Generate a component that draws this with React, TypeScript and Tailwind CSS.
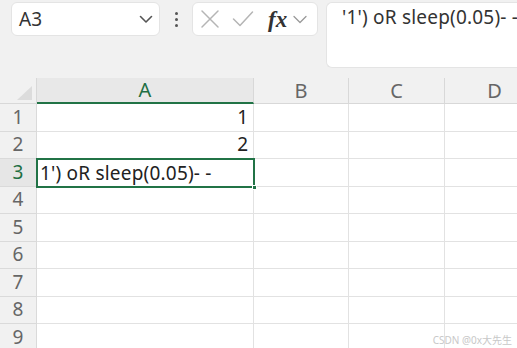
import React from "react";

const font = { fontFamily: '"Noto Sans", "Liberation Sans", "Noto Sans CJK SC", sans-serif' };

function Chevron({ className }: { className?: string }) {
  return (
    <svg className={className} width="14" height="9" viewBox="0 0 14 9" fill="none">
      <path d="M1.5 1.5 L7 7 L12.5 1.5" stroke="#555" strokeWidth="1.6" strokeLinecap="round" strokeLinejoin="round" />
    </svg>
  );
}

export default function App() {
  const rows = [1, 2, 3, 4, 5, 6, 7, 8, 9];
  const cols = ["B", "C", "D"];
  return (
    <div className="relative w-[517px] h-[348px] overflow-hidden bg-white" style={font}>
      {/* toolbar */}
      <div className="h-[78px] bg-[#f1f1f1] flex items-start pt-[2px] pl-[11px]">
        <div className="shrink-0 w-[149px] h-[34px] bg-white rounded-[6px] border border-[#e4e4e4] flex items-center justify-between pl-[7px] pr-[6px]">
          <span className="text-[19px] text-[#333] leading-none">A3</span>
          <Chevron />
        </div>
        <div className="shrink-0 w-[32px] h-[34px] flex flex-col items-center justify-center gap-[3px]">
          <span className="w-[3px] h-[3px] rounded-full bg-[#555]" />
          <span className="w-[3px] h-[3px] rounded-full bg-[#555]" />
          <span className="w-[3px] h-[3px] rounded-full bg-[#555]" />
        </div>
        <div className="shrink-0 w-[126px] h-[34px] bg-white rounded-[6px] border border-[#e4e4e4] flex items-center pl-[7px]">
          <svg width="20" height="20" viewBox="0 0 20 20">
            <path d="M2 2 L18 18 M18 2 L2 18" stroke="#b5b5b5" strokeWidth="1.5" strokeLinecap="round" />
          </svg>
          <svg width="22" height="20" viewBox="0 0 22 20" className="ml-[12px]">
            <path d="M1.5 10 L8 16.5 L20.5 3" stroke="#b5b5b5" strokeWidth="1.5" fill="none" strokeLinecap="round" strokeLinejoin="round" />
          </svg>
          <span
            className="ml-[14px] text-[23px] text-[#333] italic font-bold leading-none"
            style={{ fontFamily: '"Liberation Serif", "DejaVu Serif", serif' }}
          >
            fx
          </span>
          <svg width="14" height="9" viewBox="0 0 14 9" className="ml-[6px]">
            <path d="M1 1.5 L7 7.5 L13 1.5" stroke="#999" strokeWidth="1.3" fill="none" strokeLinecap="round" strokeLinejoin="round" />
          </svg>
        </div>
        <div className="ml-[8px] flex-1 min-w-0 overflow-hidden h-[66px] bg-white rounded-l-[6px] border border-r-0 border-[#e4e4e4] flex items-start pt-[5px]">
          <span className="ml-[15px] text-[19px] tracking-[0.2px] text-[#333] whitespace-nowrap leading-none">'1') oR sleep(0.05)- -</span>
        </div>
      </div>

      {/* grid */}
      <div className="grid grid-cols-[37px_217px_95px_96px_100px] grid-rows-[26px_repeat(9,27.5px)]">
        {/* header row */}
        <div className="bg-[#f1f1f1] border-r border-b border-[#d8d8d8] relative overflow-hidden">
          <svg width="37" height="26" className="absolute inset-0">
            <path d="M32 8 L32 22 L17 22 Z" fill="#dcdcdc" />
          </svg>
        </div>
        <div className="bg-[#e8e8e8] border-r border-[#d8d8d8] border-b-2 border-b-[#217346] flex items-center justify-center text-[20px] text-[#1f6f43] leading-none">
          A
        </div>
        {cols.map((c) => (
          <div key={c} className="bg-[#f1f1f1] border-r border-b border-[#d8d8d8] flex items-center justify-center text-[20px] text-[#666] leading-none">
            {c}
          </div>
        ))}
        {rows.map((r) => (
          <React.Fragment key={r}>
            <div
              className={`border-r border-b border-[#dadada] flex items-center justify-center text-[19px] leading-none ${
                r === 3 ? "bg-[#e6e6e6] text-[#1f6f43]" : "bg-[#f1f1f1] text-[#666]"
              }`}
            >
              {r}
            </div>
            <div className="border-r border-b border-[#e2e2e2] flex items-center justify-end pr-[5px] text-[19px] text-[#222] leading-none">
              {r === 1 ? "1" : r === 2 ? "2" : ""}
            </div>
            <div className="border-r border-b border-[#e2e2e2]" />
            <div className="border-r border-b border-[#e2e2e2]" />
            <div className="border-r border-b border-[#e2e2e2]" />
          </React.Fragment>
        ))}
      </div>

      {/* selection */}
      <div className="absolute left-[36px] top-[158px] w-[219px] h-[30px] border-2 border-[#217346] flex items-center pl-[2px]">
        <span className="text-[19px] tracking-[0.2px] text-[#222] whitespace-nowrap leading-none">1') oR sleep(0.05)- -</span>
      </div>
      <div className="absolute left-[252px] top-[185px] w-[5px] h-[5px] bg-[#217346] border border-white" />

      {/* watermark */}
      <div className="absolute right-[5px] bottom-[3px] text-[10px] text-[#c8c8c8] leading-none">CSDN @0x大先生</div>
    </div>
  );
}
